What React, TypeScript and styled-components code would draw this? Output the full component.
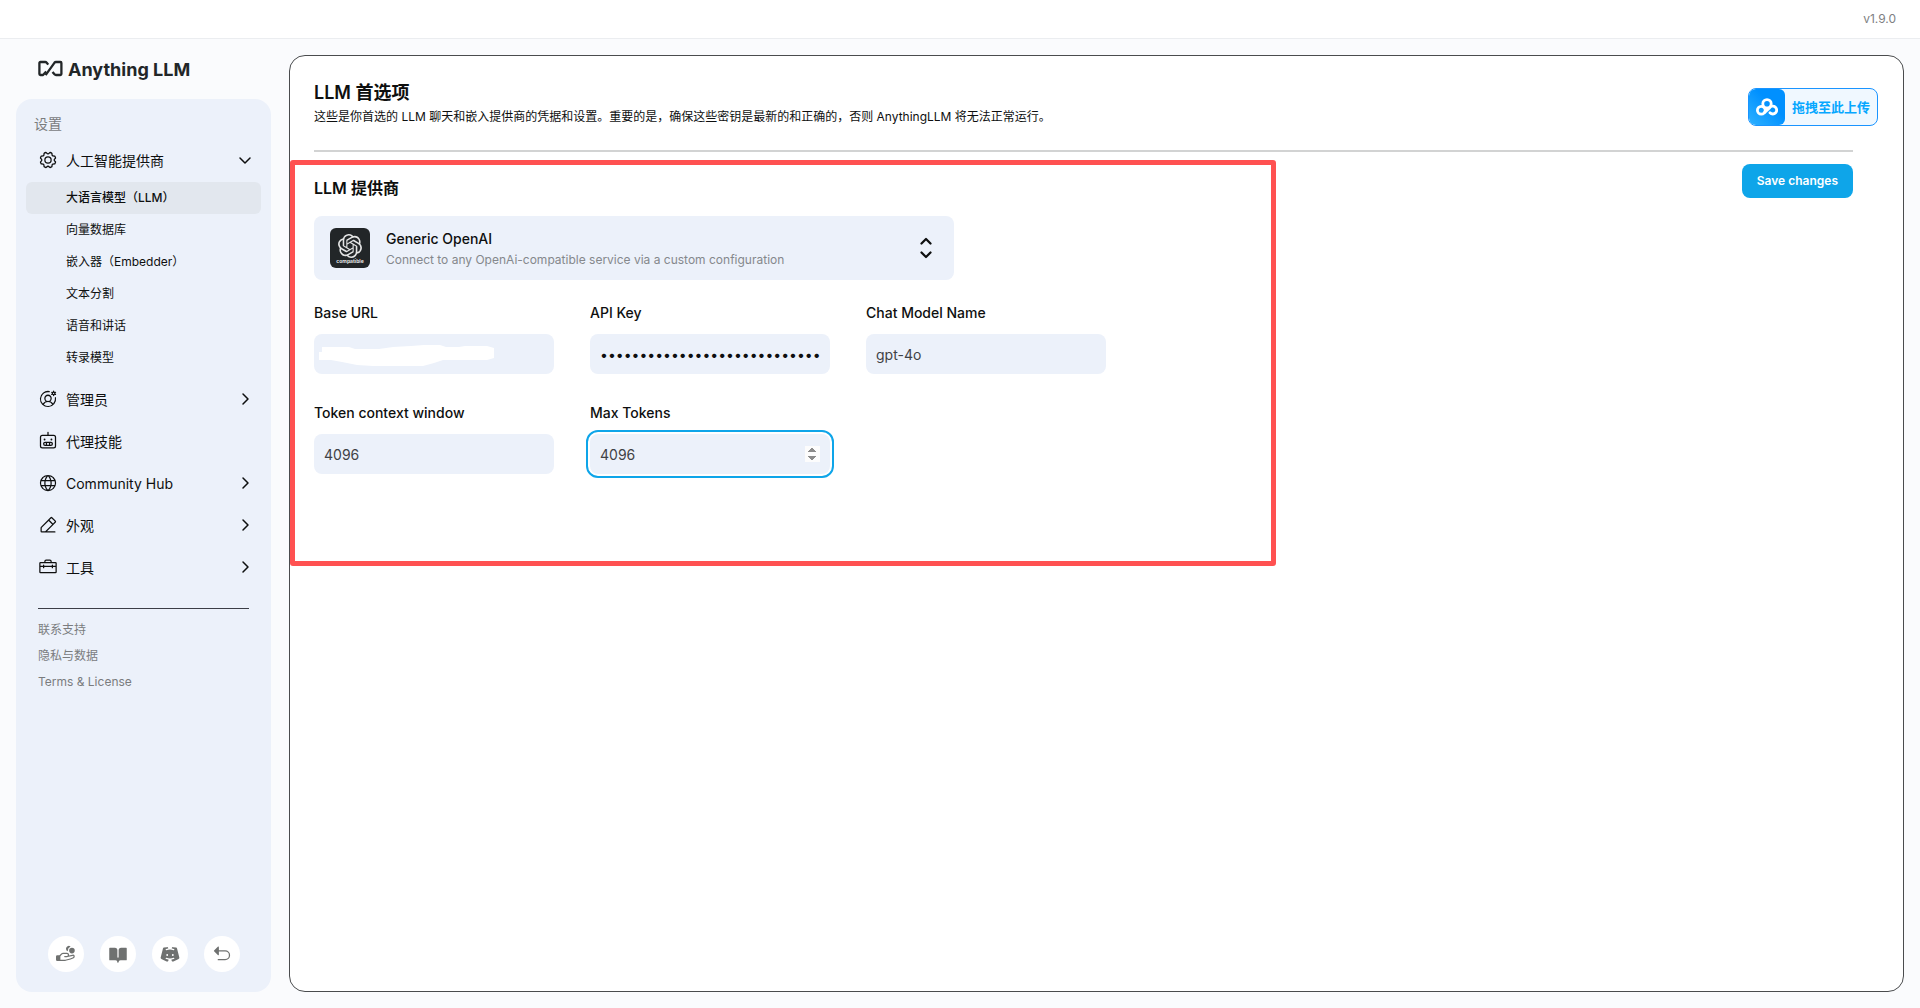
import React from "react";
import styled, { createGlobalStyle, css } from "styled-components";
import {
  PiArrowUUpLeftFill,
  PiBookOpenFill,
  PiCaretDownBold,
  PiCaretRightBold,
  PiCaretUpDownBold,
  PiDiscordLogoFill,
  PiGear,
  PiGlobe,
  PiHandCoinsFill,
  PiPencilSimpleLine,
  PiRobot,
  PiToolbox,
  PiUserCircleGear,
} from "react-icons/pi";
import { SiOpenai } from "react-icons/si";

const GlobalStyle = createGlobalStyle`
  *, *::before, *::after { box-sizing: border-box; }
  body {
    margin: 0;
    background: #fafbfd;
    color: #0e0f0f;
    font-family: Inter, "Noto Sans CJK SC", sans-serif;
    font-size: 14px;
  }
  button, input { font: inherit; color: inherit; }
  button { cursor: pointer; border: 0; padding: 0; }
  a { color: inherit; text-decoration: none; }
  h1, h2, p, ul { margin: 0; padding: 0; }
  li { list-style: none; }
`;

const Page = styled.div`
  min-height: 100vh;
  display: flex;
  flex-direction: column;
`;

const TopBar = styled.header`
  height: 39px;
  padding: 0 24px 2px;
  display: flex;
  align-items: center;
  justify-content: flex-end;
  background: #fff;
  border-bottom: 1px solid #ebedf0;
  color: #7e8082;
  font-size: 12px;
`;

const Shell = styled.div`
  flex: 1;
  display: flex;
  gap: 18px;
  padding: 16px;
`;

const Sidebar = styled.aside`
  flex: 0 0 255px;
  display: flex;
  flex-direction: column;
`;

const Brand = styled.a`
  height: 44px;
  padding: 3px 22px 0;
  display: flex;
  align-items: flex-start;
  gap: 5px;
  color: #222628;
  font-size: 18px;
  line-height: 24px;
  font-weight: 700;

  svg {
    margin-top: 2px;
  }
`;

const SidePanel = styled.div`
  flex: 1;
  display: flex;
  flex-direction: column;
  padding: 12px 10px 20px;
  border-radius: 16px;
  background: #ecf1fa;
`;

const SideHeading = styled.p`
  padding: 0 8px;
  margin-bottom: 2px;
  line-height: 26px;
  color: #7a7c7e;
`;

const navRow = css`
  display: flex;
  align-items: center;
  width: 100%;
  border-radius: 6px;
  background: none;
  text-align: left;
`;

const NavButton = styled.button`
  ${navRow}
  height: 42px;
  padding: 0 8px 0 12px;
  gap: 8px;

  span {
    flex: 1;
  }
`;

const SubList = styled.ul`
  padding: 1px 0 4px;
`;

const SubLink = styled.a<{ $active?: boolean }>`
  ${navRow}
  height: 32px;
  padding: 0 40px 3px;
  font-size: 12px;
  font-weight: ${(p) => (p.$active ? 500 : 400)};
  background: ${(p) => (p.$active ? "#e2e7ee" : "transparent")};
`;

const SideLinks = styled.div`
  margin: 20px 12px 0;
  padding-top: 8px;
  border-top: 1px solid #3b3d46;
  display: flex;
  flex-direction: column;
  color: #7a7c7e;
  font-size: 12px;
  line-height: 26px;
`;

const SideFooter = styled.div`
  margin-top: auto;
  display: flex;
  justify-content: center;
  gap: 16px;
`;

const RoundButton = styled.button`
  width: 36px;
  height: 36px;
  border-radius: 50%;
  display: grid;
  place-items: center;
  background: #fff;
  color: #6f7170;
`;

const Main = styled.main`
  position: relative;
  flex: 1;
  min-width: 0;
  padding: 25px 50px 24px 24px;
  background: #fff;
  border: 1px solid #4a4c4e;
  border-radius: 16px;
`;

const PageHeader = styled.header`
  display: flex;
  flex-direction: column;
  gap: 3px;
  padding-bottom: 24px;
  border-bottom: 2px solid #d2d3d3;
`;

const Title = styled.h1`
  font-size: 18px;
  line-height: 24px;
  font-weight: 600;
`;

const Description = styled.p`
  font-size: 12px;
  line-height: 18px;
`;

const Body = styled.form`
  position: relative;
  display: flex;
  justify-content: space-between;
  align-items: flex-start;
  padding-top: 12px;
`;

const Highlight = styled.div`
  position: absolute;
  top: 8px;
  left: -24px;
  width: 986px;
  height: 406px;
  border: 5px solid #ff5151;
  border-radius: 3px;
  pointer-events: none;
`;

const Settings = styled.div`
  padding-top: 12px;
`;

const SectionTitle = styled.h2`
  margin-bottom: 16px;
  font-size: 16px;
  line-height: 24px;
  font-weight: 600;
`;

const ProviderButton = styled.button`
  width: 640px;
  height: 64px;
  padding: 0 16px;
  display: flex;
  align-items: center;
  gap: 16px;
  border-radius: 8px;
  background: #ecf1fa;
  text-align: left;
`;

const ProviderLogo = styled.span`
  width: 40px;
  height: 40px;
  border-radius: 6px;
  display: flex;
  flex-direction: column;
  align-items: center;
  justify-content: flex-end;
  padding-bottom: 3px;
  background: #222628;
  color: #e4e5e5;
  font-size: 5px;
  line-height: 7px;
  font-weight: 700;
`;

const ProviderText = styled.span`
  flex: 1;
  display: flex;
  flex-direction: column;
  gap: 1px;
  padding-top: 3px;
  line-height: 20px;
  font-weight: 500;

  small {
    color: #85888c;
    font-size: 12px;
    font-weight: 400;
  }
`;

const Fields = styled.div`
  display: grid;
  grid-template-columns: repeat(3, 240px);
  gap: 29px 36px;
  margin-top: 23px;
`;

const Field = styled.div`
  position: relative;
  display: flex;
  flex-direction: column;
  gap: 11px;

  label {
    line-height: 20px;
    font-weight: 500;
  }
`;

const Input = styled.input<{ $focused?: boolean }>`
  width: 100%;
  height: 40px;
  padding: 0 10px;
  border: 0;
  border-radius: 8px;
  background: #ecf1fa;
  color: #3f4245;
  outline: ${(p) => (p.$focused ? "2px solid #0ea5e9" : "none")};
  outline-offset: 2px;

  &[type="password"] {
    color: #0e0f0f;
  }

  &::-webkit-inner-spin-button {
    opacity: ${(p) => (p.$focused ? 1 : 0)};
  }
`;

const Redaction = styled.svg`
  position: absolute;
  left: 5px;
  bottom: 8px;
  pointer-events: none;
`;

const SaveButton = styled.button`
  height: 34px;
  padding: 0 15px 1px;
  border-radius: 8px;
  background: #0ea5e9;
  color: #fff;
  font-size: 12px;
  font-weight: 600;
`;

const UploadButton = styled.button`
  position: absolute;
  top: 32px;
  right: 25px;
  height: 38px;
  display: flex;
  align-items: stretch;
  overflow: hidden;
  border: 1px solid #1a94ff;
  border-radius: 8px;
  background: #f0f8ff;
  color: #06a7ff;
  font-size: 13px;
  font-weight: 700;
`;

const UploadIcon = styled.span`
  width: 36px;
  display: grid;
  place-items: center;
  border-radius: 6px;
  background: linear-gradient(45deg, #2eb1ff, #0090ff 60%);
`;

const UploadLabel = styled.span`
  padding: 0 7px 2px;
  align-self: center;
`;

const SUB_ITEMS = ["大语言模型（LLM）", "向量数据库", "嵌入器（Embedder）", "文本分割", "语音和讲话", "转录模型"];

const SECTIONS = [
  { label: "管理员", Icon: PiUserCircleGear, expandable: true },
  { label: "代理技能", Icon: PiRobot, expandable: false },
  { label: "Community Hub", Icon: PiGlobe, expandable: true },
  { label: "外观", Icon: PiPencilSimpleLine, expandable: true },
  { label: "工具", Icon: PiToolbox, expandable: true },
];

const FOOTER = [
  { label: "Sponsor", Icon: PiHandCoinsFill },
  { label: "Docs", Icon: PiBookOpenFill },
  { label: "Discord", Icon: PiDiscordLogoFill },
  { label: "Back", Icon: PiArrowUUpLeftFill },
];

function BrandMark() {
  return (
    <svg width="25" height="17" viewBox="0 0 25 17" fill="none" stroke="currentColor" strokeWidth="2.3" strokeLinejoin="round" aria-hidden="true">
      <path d="M8.200 11.400 5 15H2.400a1 1 0 0 1-1-1V3a1 1 0 0 1 1-1h4.800a2 2 0 0 1 1.500.7L10.200 4.600" />
      <path d="M7.600 15.200 16.400 2.800a2 2 0 0 1 1.600-.8h4.400a1 1 0 0 1 1 1v11a1 1 0 0 1-1 1h-4.400a2 2 0 0 1-1.500-.7l-2-2.400" />
    </svg>
  );
}

function CloudMark() {
  return (
    <svg width="22" height="18" viewBox="0 0 22 18" fill="none" stroke="#fff" strokeWidth="2.8" strokeLinecap="round" aria-hidden="true">
      <circle cx="11" cy="5.800" r="4.200" />
      <circle cx="5.300" cy="12.200" r="3.900" />
      <path d="M8.400 14.600 13.700 9.700a3.900 3.900 0 1 1 .300 5.100" />
    </svg>
  );
}

export default function App() {
  return (
    <>
      <GlobalStyle />
      <Page>
        <TopBar>v1.9.0</TopBar>
        <Shell>
          <Sidebar>
            <Brand href="#">
              <BrandMark />
              Anything LLM
            </Brand>
            <SidePanel>
              <SideHeading>设置</SideHeading>
              <nav>
                <NavButton type="button" aria-expanded="true">
                  <PiGear size={20} />
                  <span>人工智能提供商</span>
                  <PiCaretDownBold size={16} />
                </NavButton>
                <SubList>
                  {SUB_ITEMS.map((label, i) => (
                    <li key={label}>
                      <SubLink href="#" $active={i === 0}>
                        {label}
                      </SubLink>
                    </li>
                  ))}
                </SubList>
                {SECTIONS.map(({ label, Icon, expandable }) => (
                  <NavButton type="button" key={label}>
                    <Icon size={20} />
                    <span>{label}</span>
                    {expandable && <PiCaretRightBold size={16} />}
                  </NavButton>
                ))}
              </nav>
              <SideLinks>
                <a href="#">联系支持</a>
                <a href="#">隐私与数据</a>
                <a href="#">Terms &amp; License</a>
              </SideLinks>
              <SideFooter>
                {FOOTER.map(({ label, Icon }) => (
                  <RoundButton type="button" key={label} aria-label={label}>
                    <Icon size={20} />
                  </RoundButton>
                ))}
              </SideFooter>
            </SidePanel>
          </Sidebar>

          <Main>
            <PageHeader>
              <Title>LLM 首选项</Title>
              <Description>
                这些是你首选的 LLM 聊天和嵌入提供商的凭据和设置。重要的是，确保这些密钥是最新的和正确的，否则 AnythingLLM 将无法正常运行。
              </Description>
            </PageHeader>
            <Body>
              <Settings>
                <SectionTitle>LLM 提供商</SectionTitle>
                <ProviderButton type="button" aria-haspopup="listbox">
                  <ProviderLogo>
                    <SiOpenai size={24} />
                    compatible
                  </ProviderLogo>
                  <ProviderText>
                    Generic OpenAI
                    <small>Connect to any OpenAi-compatible service via a custom configuration</small>
                  </ProviderText>
                  <PiCaretUpDownBold size={24} />
                </ProviderButton>
                <Fields>
                  <Field>
                    <label htmlFor="base-url">Base URL</label>
                    <Input id="base-url" type="url" />
                    <Redaction width="176" height="21" viewBox="0 0 176 21" aria-hidden="true">
                      <path d="M3 2h27l6 2h24l14-2 18-1 13-1h16l6 2h13l6-1h22l7 2v10l-7 2h-44l-9 3-11 3H54l-16-1-15-3-11-2H0V7h3z" fill="#fff" />
                    </Redaction>
                  </Field>
                  <Field>
                    <label htmlFor="api-key">API Key</label>
                    <Input id="api-key" type="password" defaultValue="0000000000000000000000000000000000000000" />
                  </Field>
                  <Field>
                    <label htmlFor="model">Chat Model Name</label>
                    <Input id="model" type="text" defaultValue="gpt-4o" />
                  </Field>
                  <Field>
                    <label htmlFor="context">Token context window</label>
                    <Input id="context" type="number" defaultValue={4096} />
                  </Field>
                  <Field>
                    <label htmlFor="max">Max Tokens</label>
                    <Input id="max" type="number" defaultValue={4096} $focused />
                  </Field>
                </Fields>
              </Settings>
              <SaveButton type="submit">Save changes</SaveButton>
              <Highlight />
            </Body>
            <UploadButton type="button">
              <UploadIcon>
                <CloudMark />
              </UploadIcon>
              <UploadLabel>拖拽至此上传</UploadLabel>
            </UploadButton>
          </Main>
        </Shell>
      </Page>
    </>
  );
}
